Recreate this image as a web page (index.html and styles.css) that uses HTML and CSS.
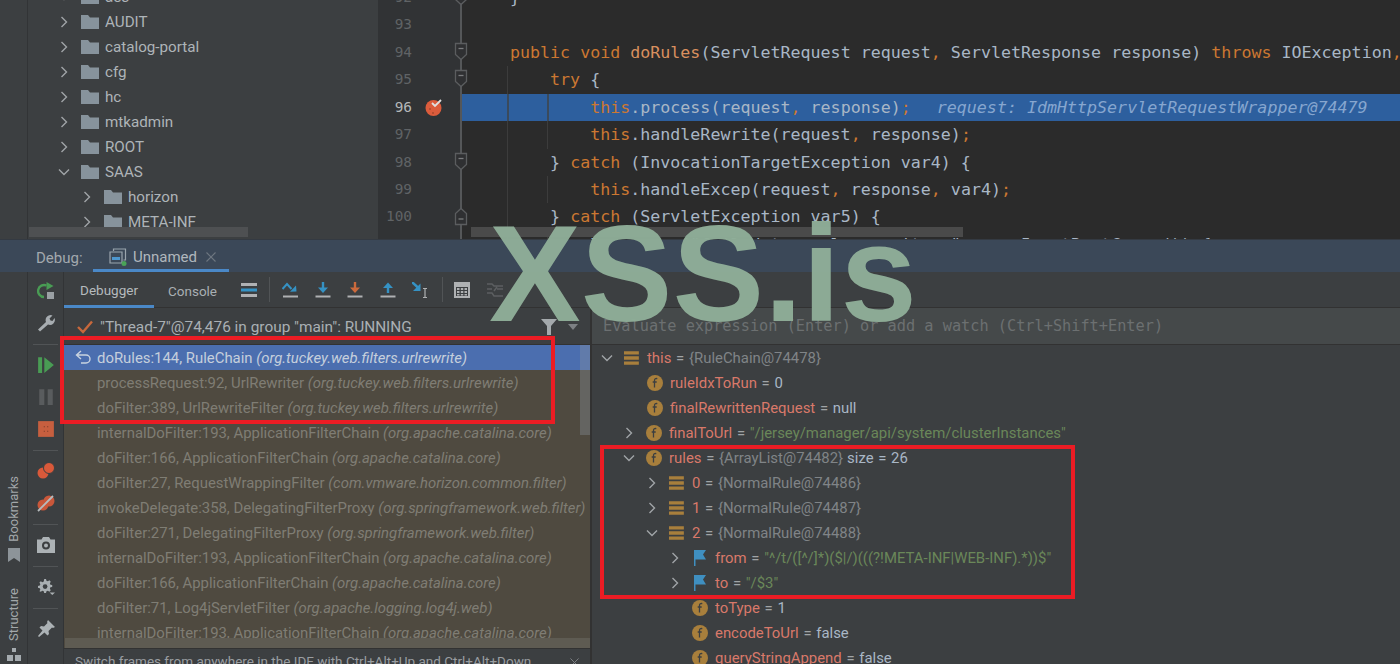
FILE: index.html
```html
<!DOCTYPE html>
<html lang="en">
<head>
<meta charset="utf-8">
<title>Debugger</title>
<link rel="stylesheet" href="styles.css">
</head>
<body>
<svg class="defs" width="0" height="0" aria-hidden="true">
  <symbol id="chev-r" viewBox="0 0 14 14"><path d="M4.500 2l5 5-5 5" fill="none" stroke="currentColor" stroke-width="1.400"/></symbol>
  <symbol id="chev-d" viewBox="0 0 14 14"><path d="M2 4.500l5 5 5-5" fill="none" stroke="currentColor" stroke-width="1.400"/></symbol>
  <symbol id="folder" viewBox="0 0 18 14"><path d="M0 0h7l2 2.500h9V14H0z" fill="#87939c"/></symbol>
  <symbol id="fold-d" viewBox="0 0 14 20"><path d="M1.500 1.500h11v11L7 17.500 1.500 12.500z" fill="#2f3032" stroke="#5b5d5f" stroke-width="1.300"/><path d="M4.500 6.500h5" stroke="#7a7c7e" stroke-width="1.300"/></symbol>
  <symbol id="fold-u" viewBox="0 0 14 20"><path d="M1.500 18.500h11v-11L7 2.500 1.500 7.500z" fill="#2f3032" stroke="#5b5d5f" stroke-width="1.300"/><path d="M4.500 13h5" stroke="#7a7c7e" stroke-width="1.300"/></symbol>
  <symbol id="field" viewBox="0 0 16 16"><circle cx="8" cy="8" r="8" fill="#a87f3c"/><path d="M10.300 3.600c-1.700-.4-2.800.3-2.800 2V12.500M5.700 7h4" fill="none" stroke="#3c3f41" stroke-width="1.300"/></symbol>
  <symbol id="list" viewBox="0 0 14 14"><path d="M0 1h13v3H0zM0 5.500h13v3H0zM0 10h13v3H0z" fill="#a87f3c"/></symbol>
  <symbol id="flag" viewBox="0 0 14 16"><path d="M1 0h12l-3 4.500L13 9.500H2.500V16H1z" fill="#3f8fc0"/></symbol>
</svg>

<div class="top">
  <div class="strip"></div>
  <nav class="tree">
    <div class="node l1"><svg class="chev"><use href="#chev-d"/></svg><svg class="fld"><use href="#folder"/></svg>aes</div>
    <div class="node l1"><svg class="chev"><use href="#chev-r"/></svg><svg class="fld"><use href="#folder"/></svg>AUDIT</div>
    <div class="node l1"><svg class="chev"><use href="#chev-r"/></svg><svg class="fld"><use href="#folder"/></svg>catalog-portal</div>
    <div class="node l1"><svg class="chev"><use href="#chev-r"/></svg><svg class="fld"><use href="#folder"/></svg>cfg</div>
    <div class="node l1"><svg class="chev"><use href="#chev-r"/></svg><svg class="fld"><use href="#folder"/></svg>hc</div>
    <div class="node l1"><svg class="chev"><use href="#chev-r"/></svg><svg class="fld"><use href="#folder"/></svg>mtkadmin</div>
    <div class="node l1"><svg class="chev"><use href="#chev-r"/></svg><svg class="fld"><use href="#folder"/></svg>ROOT</div>
    <div class="node l1"><svg class="chev"><use href="#chev-d"/></svg><svg class="fld"><use href="#folder"/></svg>SAAS</div>
    <div class="node l2"><svg class="chev"><use href="#chev-r"/></svg><svg class="fld"><use href="#folder"/></svg>horizon</div>
    <div class="node l2"><svg class="chev"><use href="#chev-r"/></svg><svg class="fld"><use href="#folder"/></svg>META-INF</div>
    <div class="hbar tree-bar"></div>
  </nav>
  <main class="editor">
    <div class="line"><span class="num">92</span><span class="bp"></span><span class="fold"><svg class="foldicon"><use href="#fold-d"/></svg></span><code class="code">}</code></div>
    <div class="line"><span class="num">93</span><span class="bp"></span><span class="fold"></span><code class="code"></code></div>
    <div class="line"><span class="num">94</span><span class="bp"></span><span class="fold"><svg class="foldicon"><use href="#fold-d"/></svg></span><code class="code"><b>public void </b><i>doRules</i>(ServletRequest request<b>,</b> ServletResponse response) <b>throws </b>IOException<b>,</b> ServletException {</code></div>
    <div class="line"><span class="num">95</span><span class="bp"></span><span class="fold"><svg class="foldicon"><use href="#fold-d"/></svg></span><code class="code g1">    <b>try</b> {</code></div>
    <div class="line cur"><span class="num">96</span><span class="bp"><svg class="bpicon" viewBox="0 0 18 18"><circle cx="8.500" cy="10" r="8" fill="#db5c3c"/><circle cx="5" cy="11" r=".8" fill="#8a3a26"/><circle cx="8" cy="15" r=".8" fill="#8a3a26"/><path d="M7 5l3 3 6-6" fill="none" stroke="#e0e0e0" stroke-width="1.800"/></svg></span><span class="fold"></span><code class="code g1 g2">        <b>this</b>.process(request<b>,</b> response)<b>;</b><em class="hint">request: IdmHttpServletRequestWrapper@74479</em></code></div>
    <div class="line"><span class="num">97</span><span class="bp"></span><span class="fold"></span><code class="code g1 g2">        <b>this</b>.handleRewrite(request<b>,</b> response)<b>;</b></code></div>
    <div class="line"><span class="num">98</span><span class="bp"></span><span class="fold"><svg class="foldicon"><use href="#fold-d"/></svg></span><code class="code g1">    } <b>catch </b>(InvocationTargetException var4) {</code></div>
    <div class="line"><span class="num">99</span><span class="bp"></span><span class="fold"></span><code class="code g1 g2">        <b>this</b>.handleExcep(request<b>,</b> response<b>,</b> var4)<b>;</b></code></div>
    <div class="line"><span class="num">100</span><span class="bp"></span><span class="fold"><svg class="foldicon"><use href="#fold-u"/></svg></span><code class="code g1">    } <b>catch </b>(ServletException var5) {</code></div>
    <div class="line"><span class="num">101</span><span class="bp"></span><span class="fold"></span><code class="code g1 g2">        log.error(<span>"failed to apply rewrite: "</span> + var5.getRootCause()) {</code></div>
    <div class="hbar editor-bar"></div>
  </main>
</div>

<section class="debug">
  <header class="debug-head">
    <span class="debug-label">Debug:</span>
    <div class="debug-tab">
      <svg class="tab-icon" viewBox="0 0 18 18"><path d="M4.500 3V1h12v11h-2" fill="none" stroke="#9aa5ad" stroke-width="1.200"/><path d="M1 4h12v11H1z" fill="none" stroke="#9aa5ad" stroke-width="1.200"/><path d="M3 9h8v3H3z" fill="#4d97cf"/><circle cx="15" cy="15.500" r="2.500" fill="#4aa357"/></svg>
      <span>Unnamed</span>
      <svg class="tab-x" viewBox="0 0 10 10"><path d="M.5.5l9 9m0-9l-9 9" stroke="#6e7780" stroke-width="1.100"/></svg>
    </div>
  </header>
  <div class="debug-body">
    <div class="side">
      <aside class="rail">
        <span class="vlabel">Bookmarks</span>
        <svg class="rail-ic bm" viewBox="0 0 12 14"><path d="M0 0h12v14L6 10 0 14z" fill="#8d9499"/></svg>
        <span class="vlabel second">Structure</span>
        <svg class="rail-ic st" viewBox="0 0 14 14"><path d="M5 0h4v4H5zM0 7h6v6H0zM8 7h6v6H8z" fill="#a5abaf"/></svg>
      </aside>
    </div>
    <div class="tools">
      <svg class="ti" viewBox="0 0 18 18"><path d="M9.500 3.500A6 6 0 1 0 7 15" fill="none" stroke="#499c54" stroke-width="2.400"/><path d="M9.500 0l7 4-7 4z" fill="#499c54"/><path d="M10 10h7v7h-7z" fill="#9aa0a4"/></svg>
      <svg class="ti" viewBox="0 0 18 18"><path d="M1 15.500l8-7.500a5 5 0 0 1 6.500-6.500L12.500 4.500l1 2 2 .5 2-3a5 5 0 0 1-6.500 6.500L3 17.500z" fill="#a7adb1"/></svg>
      <i class="tsep"></i>
      <svg class="ti" viewBox="0 0 16 16"><path d="M1 1h3.500v14H1zM6.500 1L15 8l-8.500 7z" fill="#499c54"/></svg>
      <svg class="ti" viewBox="0 0 16 16"><path d="M2 1h4.500v14H2zM9.500 1H14v14H9.500z" fill="#595c5e"/></svg>
      <svg class="ti" viewBox="0 0 16 16"><path d="M1 1h14v14H1z" fill="#c75f3f"/><path d="M6 5.500h1v1H6zM9 5.500h1v1H9zM6 9.500h1v1H6zM9 9.500h1v1H9z" fill="#7c3d2a"/></svg>
      <i class="tsep"></i>
      <svg class="ti" viewBox="0 0 18 18"><circle cx="6" cy="11" r="5.500" fill="#d9593a"/><circle cx="12" cy="6" r="5.500" fill="#d9593a" stroke="#3c3f41" stroke-width="1"/></svg>
      <svg class="ti" viewBox="0 0 18 18"><circle cx="6" cy="11" r="5.500" fill="#c9573a"/><circle cx="12" cy="7" r="5.500" fill="#c9573a"/><path d="M1 17L16 2" stroke="#b7bbbd" stroke-width="1.800"/></svg>
      <i class="tsep"></i>
      <svg class="ti" viewBox="0 0 18 16"><path d="M0 2.500h4.500L6 0h6l1.500 2.500H18V16H0z" fill="#acb2b5"/><circle cx="9" cy="8.500" r="4" fill="#3c3f41"/><circle cx="9" cy="8.500" r="2" fill="#acb2b5"/></svg>
      <i class="tsep"></i>
      <svg class="ti" viewBox="0 0 20 20"><path d="M8 1h2l.5 2 1.500.6 1.800-1 1.500 1.500-1 1.800.6 1.500 2 .5v2l-2 .5-.6 1.500 1 1.800-1.500 1.500-1.800-1-1.500.6-.5 2H8l-.5-2-1.500-.6-1.800 1L2.700 14.700l1-1.800-.6-1.500-2-.5v-2l2-.5.6-1.500-1-1.800L4.200 3.600l1.800 1 1.500-.6z" fill="#a9afb2"/><circle cx="9" cy="9.500" r="2.600" fill="#3c3f41"/><path d="M14 16h6l-3 3z" fill="#a9afb2"/></svg>
      <i class="tsep"></i>
      <svg class="ti" viewBox="0 0 18 18"><path d="M11 0l7 7-2 1-1-.5-3.500 3.500.5 3-1.500 1.500-3-3L2 17l-1-1 4.500-5.500-3-3L4 6l3 .5L10.500 3 10 2z" fill="#acb2b5"/></svg>
    </div>
    <div class="panels">
      <div class="subtabs">
        <span class="subtab on">Debugger</span>
        <span class="subtab">Console</span>
        <svg class="bi wide" viewBox="0 0 16 14"><path d="M0 0h16v3H0zM0 11h16v3H0z" fill="#afb1b3"/><path d="M0 5.500h16v3H0z" fill="#3592c4"/></svg>
        <i class="bsep first"></i>
        <svg class="bi" viewBox="0 0 16 16"><path d="M.5 7L5 2l4.500 5" fill="none" stroke="#3592c4" stroke-width="2"/><path d="M8 9.800l6.500-.3L14 3.500z" fill="#3592c4"/><path d="M1 13.500h15v2H1z" fill="#afb1b3"/></svg>
        <svg class="bi" viewBox="0 0 16 16"><path d="M8 0v7" stroke="#3592c4" stroke-width="2.400"/><path d="M3 5.500h10L8 11z" fill="#3592c4"/><path d="M.5 13.500h15v2H.5z" fill="#afb1b3"/></svg>
        <svg class="bi" viewBox="0 0 16 16"><path d="M8 0v7" stroke="#cc6a3c" stroke-width="2.400"/><path d="M3 5.500h10L8 11z" fill="#cc6a3c"/><path d="M.5 13.500h15v2H.5z" fill="#afb1b3"/></svg>
        <svg class="bi" viewBox="0 0 16 16"><path d="M8 11V4" stroke="#3592c4" stroke-width="2.400"/><path d="M3 6h10L8 .5z" fill="#3592c4"/><path d="M.5 13.500h15v2H.5z" fill="#afb1b3"/></svg>
        <svg class="bi" viewBox="0 0 16 16"><path d="M0 0l6.500 6" stroke="#3592c4" stroke-width="2.400"/><path d="M8.500 1.500V9H1z" fill="#3592c4"/><path d="M11 6.500h4M11 15.500h4M13 6.500v9" stroke="#afb1b3" stroke-width="1.200" fill="none"/></svg>
        <i class="bsep second"></i>
        <svg class="bi" viewBox="0 0 16 16"><path d="M0 0h16v16H0z" fill="#afb1b3"/><path d="M2 5h12v9H2z" fill="#3c3f41"/><path d="M3 6h2.500v2H3zM6.800 6h2.500v2H6.800zM10.500 6H13v2h-2.500zM3 9h2.500v2H3zM6.800 9h2.500v2H6.800zM10.500 9H13v2h-2.500zM3 12h2.500v1.500H3zM6.800 12h2.500v1.500H6.800zM10.500 12H13v1.500h-2.500z" fill="#afb1b3"/></svg>
        <svg class="bi" viewBox="0 0 16 14"><path d="M0 1h5l2 2h9M0 6h5M10 6h6M0 10h5l2 3h9M7 8l3-4" fill="none" stroke="#5c5f61" stroke-width="1.500"/></svg>
      </div>
      <div class="split">
        <div class="stack">
          <div class="thread">
            <svg class="check" viewBox="0 0 16 14"><path d="M1 7l5 5L15 1.500" fill="none" stroke="#c7683c" stroke-width="2.400"/></svg>
            <span>"Thread-7"@74,476 in group "main": RUNNING</span>
            <svg class="funnel" viewBox="0 0 16 16"><path d="M0 0h16l-6 7v9H6V7z" fill="#a4a9ac"/></svg>
            <svg class="caret" viewBox="0 0 10 6"><path d="M0 0h10L5 6z" fill="#7d8184"/></svg>
          </div>
          <ul class="frames">
            <li class="frame sel"><svg class="ret" viewBox="0 0 16 14"><path d="M6 1L1.500 5 6 9M2 5h9a3.500 3.500 0 0 1 0 8H6" fill="none" stroke="#c9d3e0" stroke-width="1.400"/></svg>doRules:144, RuleChain <em>(org.tuckey.web.filters.urlrewrite)</em></li>
            <li class="frame">processRequest:92, UrlRewriter <em>(org.tuckey.web.filters.urlrewrite)</em></li>
            <li class="frame">doFilter:389, UrlRewriteFilter <em>(org.tuckey.web.filters.urlrewrite)</em></li>
            <li class="frame">internalDoFilter:193, ApplicationFilterChain <em>(org.apache.catalina.core)</em></li>
            <li class="frame">doFilter:166, ApplicationFilterChain <em>(org.apache.catalina.core)</em></li>
            <li class="frame">doFilter:27, RequestWrappingFilter <em>(com.vmware.horizon.common.filter)</em></li>
            <li class="frame">invokeDelegate:358, DelegatingFilterProxy <em>(org.springframework.web.filter)</em></li>
            <li class="frame">doFilter:271, DelegatingFilterProxy <em>(org.springframework.web.filter)</em></li>
            <li class="frame">internalDoFilter:193, ApplicationFilterChain <em>(org.apache.catalina.core)</em></li>
            <li class="frame">doFilter:166, ApplicationFilterChain <em>(org.apache.catalina.core)</em></li>
            <li class="frame">doFilter:71, Log4jServletFilter <em>(org.apache.logging.log4j.web)</em></li>
            <li class="frame">internalDoFilter:193, ApplicationFilterChain <em>(org.apache.catalina.core)</em></li>
            <li class="vbar"></li>
            <li class="fbar"></li>
          </ul>
          <div class="hintbar"><span>Switch frames from anywhere in the IDE with Ctrl+Alt+Up and Ctrl+Alt+Down</span><svg class="hint-x" viewBox="0 0 10 10"><path d="M.5.5l9 9m0-9l-9 9" stroke="#7d8184" stroke-width="1.100"/></svg></div>
        </div>
        <div class="vars">
          <div class="evaluate">Evaluate expression (Enter) or add a watch (Ctrl+Shift+Enter)</div>
          <div class="var v0"><svg class="arr"><use href="#chev-d"/></svg><svg class="vic"><use href="#list"/></svg><span class="n">this</span> = <span class="g">{RuleChain@74478}</span></div>
          <div class="var v1"><span class="arr"></span><svg class="vic"><use href="#field"/></svg><span class="n">ruleIdxToRun</span> = <span class="l">0</span></div>
          <div class="var v1"><span class="arr"></span><svg class="vic"><use href="#field"/></svg><span class="n">finalRewrittenRequest</span> = <span class="l">null</span></div>
          <div class="var v0 shift"><svg class="arr"><use href="#chev-r"/></svg><svg class="vic"><use href="#field"/></svg><span class="n">finalToUrl</span> = <span class="s">"/jersey/manager/api/system/clusterInstances"</span></div>
          <div class="var v0 shift"><svg class="arr"><use href="#chev-d"/></svg><svg class="vic"><use href="#field"/></svg><span class="n">rules</span> = <span class="g">{ArrayList@74482}</span> <span class="l size">size = 26</span></div>
          <div class="var v2"><svg class="arr"><use href="#chev-r"/></svg><svg class="vic"><use href="#list"/></svg><span class="n">0</span> = <span class="g">{NormalRule@74486}</span></div>
          <div class="var v2"><svg class="arr"><use href="#chev-r"/></svg><svg class="vic"><use href="#list"/></svg><span class="n">1</span> = <span class="g">{NormalRule@74487}</span></div>
          <div class="var v2"><svg class="arr"><use href="#chev-d"/></svg><svg class="vic"><use href="#list"/></svg><span class="n">2</span> = <span class="g">{NormalRule@74488}</span></div>
          <div class="var v3"><svg class="arr"><use href="#chev-r"/></svg><svg class="vic"><use href="#flag"/></svg><span class="n">from</span> = <span class="s">"^/t/([^/]*)($|/)(((?!META-INF|WEB-INF).*))$"</span></div>
          <div class="var v3"><svg class="arr"><use href="#chev-r"/></svg><svg class="vic"><use href="#flag"/></svg><span class="n">to</span> = <span class="s">"/$3"</span></div>
          <div class="var v3"><span class="arr"></span><svg class="vic"><use href="#field"/></svg><span class="n">toType</span> = <span class="l">1</span></div>
          <div class="var v3"><span class="arr"></span><svg class="vic"><use href="#field"/></svg><span class="n">encodeToUrl</span> = <span class="l">false</span></div>
          <div class="var v3"><span class="arr"></span><svg class="vic"><use href="#field"/></svg><span class="n">queryStringAppend</span> = <span class="l">false</span></div>
        </div>
      </div>
    </div>
  </div>
</section>

<div class="redbox box-frames"></div>
<div class="redbox box-rules"></div>
<div class="watermark">XSS.is</div>
</body>
</html>
```

FILE: styles.css
```css
* { box-sizing: border-box; }
html, body { margin: 0; padding: 0; }
body {
  position: relative;
  width: 1400px;
  height: 664px;
  overflow: hidden;
  background: #3c3f41;
  font-family: Roboto, "Liberation Sans", sans-serif;
  font-size: 15px;
  color: #aeb4b8;
}
.defs { position: absolute; }

/* top area */
.top { display: flex; height: 239px; overflow: hidden; }
.strip { width: 28px; flex: none; background: #3c3f41; border-right: 1px solid #323436; }
.tree {
  position: relative;
  width: 350px;
  flex: none;
  height: 239px;
  overflow: hidden;
  background: #3c3f41;
}
.node {
  display: flex;
  align-items: center;
  height: 25px;
  padding-top: 1px;
  white-space: nowrap;
  font-size: 15.200px;
  color: #aeb4b8;
}
.node:first-child { margin-top: -16px; }
.node.l1 { padding-left: 29px; }
.node.l2 { padding-left: 52px; }
.chev { width: 14px; height: 14px; color: #a0a4a7; flex: none; }
.fld { width: 18px; height: 14px; margin: 0 6px 0 10px; flex: none; }
.hbar { position: absolute; height: 10px; top: 227px; background: #4e5052; }
.tree-bar { left: 1px; width: 219px; }

.editor {
  position: relative;
  flex: 1;
  height: 239px;
  overflow: hidden;
  background: #2b2b2b;
}
.editor-bar { left: 93px; width: 492px; background: #4a4a4a; }
.line {
  display: flex;
  height: 27.430px;
  white-space: pre;
  font-family: "DejaVu Sans Mono", "Liberation Mono", monospace;
  align-items: stretch;
}
.line:first-child { margin-top: -16px; }
.num {
  width: 34px;
  flex: none;
  background: #313335;
  color: #606366;
  text-align: right;
  font-size: 14.400px;
  line-height: 27.430px;
}
.cur .num { color: #b5b8ba; }
.bp {
  width: 40px;
  flex: none;
  background: #313335;
  padding: 4px 0 0 13px;
}
.bpicon { display: block; width: 18px; height: 18px; }
.fold {
  width: 18px;
  flex: none;
  position: relative;
  background:
    linear-gradient(#555759, #555759) 8px 0 / 2px 100% no-repeat,
    linear-gradient(90deg, #313335 8px, #2b2b2b 8px);
}
.cur .fold {
  background:
    linear-gradient(#555759, #555759) 8px 0 / 2px 100% no-repeat,
    linear-gradient(90deg, #313335 8px, #2d5f9e 8px);
}
.foldicon { position: absolute; left: 2px; top: 3px; width: 14px; height: 20px; }
.code {
  flex: 1;
  padding-left: 40px;
  font-family: inherit;
  font-size: 16.650px;
  line-height: 27.430px;
  color: #a9b7c6;
  overflow: hidden;
}
.code b { font-weight: 400; color: #cc7832; }
.code i { font-style: normal; color: #d9905f; }
.code.g1 { background: linear-gradient(#3c3c3c, #3c3c3c) 37px 0 / 1px 100% no-repeat; }
.code.g1.g2 {
  background:
    linear-gradient(#3c3c3c, #3c3c3c) 37px 0 / 1px 100% no-repeat,
    linear-gradient(#3c3c3c, #3c3c3c) 77px 0 / 1px 100% no-repeat;
}
.cur .code.g1.g2 {
  background:
    linear-gradient(#3a4a5c, #3a4a5c) 37px 0 / 2px 100% no-repeat,
    linear-gradient(#3a4a5c, #3a4a5c) 77px 0 / 2px 100% no-repeat,
    #2d5f9e;
}
.hint { margin-left: 26px; font-style: italic; color: #86a6cf; }

/* debug panel */
.debug { height: 425px; display: flex; flex-direction: column; overflow: hidden; }
.debug-head {
  display: flex;
  align-items: center;
  height: 33px;
  flex: none;
  padding-left: 28px;
  background: #3b4858;
  border-top: 1px solid #343a42;
}
.debug-label { width: 65px; padding: 3px 0 0 8px; font-size: 15px; color: #a3a9ae; }
.debug-tab {
  display: flex;
  align-items: center;
  width: 136px;
  height: 32px;
  padding: 4px 0 0 16px;
  border-bottom: 3px solid #4a88c7;
  font-size: 15px;
  color: #b0b7bd;
}
.tab-icon { width: 18px; height: 18px; margin-right: 6px; }
.tab-x { width: 10px; height: 10px; margin-left: 9px; }

.debug-body { display: flex; flex: 1; min-height: 0; }
.side { width: 28px; flex: none; border-right: 1px solid #323436; }
.rail { display: flex; flex-direction: column; align-items: center; height: 100%; padding-top: 204px; overflow: hidden; }
.vlabel {
  writing-mode: vertical-rl;
  transform: rotate(180deg);
  font-size: 13px;
  color: #a3a8ab;
  line-height: 16px;
  flex: none;
}
.vlabel.second { margin-top: 26px; }
.rail-ic { flex: none; }
.rail-ic.bm { width: 12px; height: 14px; margin-top: 6px; }
.rail-ic.st { width: 14px; height: 14px; margin-top: 7px; }

.tools {
  width: 36px;
  flex: none;
  display: flex;
  flex-direction: column;
  align-items: center;
  padding-top: 10px;
  border-right: 1px solid #323436;
}
.ti { width: 18px; height: 18px; flex: none; margin-bottom: 14px; }
.tsep { display: block; width: 25px; height: 1px; background: #515456; margin: -2px 0 11px; flex: none; }

.panels { flex: 1; display: flex; flex-direction: column; min-width: 0; }
.subtabs {
  display: flex;
  align-items: center;
  height: 36px;
  flex: none;
  border-bottom: 1px solid #323232;
}
.subtab {
  display: flex;
  align-items: center;
  justify-content: center;
  height: 36px;
  padding-top: 2px;
  font-size: 13.500px;
  color: #a9afb3;
  width: 90px;
}
.subtab + .subtab { width: 77px; }
.subtab.on { border-bottom: 3px solid #4a88c7; color: #b5babd; padding-top: 3px; }
.bi { width: 16px; height: 16px; flex: none; margin-left: 16.500px; }
.bi.wide { margin-left: 10px; }
.bsep { width: 1px; height: 25px; background: #515456; flex: none; }
.bsep.first { margin: 0 -4.500px 0 12px; }
.bsep.second { margin: 0 -5.500px 0 14px; }

.split { display: flex; flex: 1; min-height: 0; }
.stack { width: 526px; flex: none; display: flex; flex-direction: column; }
.thread {
  display: flex;
  align-items: center;
  height: 37px;
  flex: none;
  padding: 1px 0 0 13px;
  font-size: 15.400px;
  color: #aab0b4;
  border-bottom: 1px solid #323232;
}
.check { width: 16px; height: 14px; margin-right: 7px; flex: none; }
.funnel { width: 16px; height: 16px; margin-left: auto; flex: none; }
.caret { width: 10px; height: 6px; margin: 0 12px 0 11px; flex: none; }

.frames {
  position: relative;
  height: 303px;
  flex: none;
  overflow: hidden;
  list-style: none;
  margin: 0;
  padding: 0;
  background: #4f4a40;
}
.frame {
  position: relative;
  height: 25px;
  line-height: 26px;
  padding-left: 33px;
  white-space: nowrap;
  font-size: 14.900px;
  color: #7f7d74;
}
.frame em { font-style: italic; }
.frame.sel { background: #4b6eaf; color: #c5cfdc; }
.ret { position: absolute; left: 11px; top: 5px; width: 16px; height: 14px; }
.vbar { position: absolute; left: 516px; top: 0; width: 10px; height: 90px; background: rgba(140, 150, 160, .35); }
.fbar { position: absolute; left: 1px; top: 293px; width: 525px; height: 10px; background: #5e5b52; }
.hintbar {
  position: relative;
  flex: 1;
  display: flex;
  align-items: center;
  padding-left: 11px;
  font-size: 13.500px;
  color: #9a9ea1;
  white-space: nowrap;
  overflow: hidden;
  border-top: 1px solid #323232;
}
.hintbar span { position: relative; top: 4px; }
.hint-x { position: absolute; left: 506px; top: 9px; width: 9px; height: 9px; }

.vars { flex: 1; border-left: 2px solid #323232; min-width: 0; overflow: hidden; }
.evaluate {
  height: 37px;
  padding-left: 11px;
  background: #45494a;
  border-bottom: 1px solid #323232;
  font-family: "DejaVu Sans Mono", "Liberation Mono", monospace;
  font-size: 15.250px;
  line-height: 37px;
  color: #6c7071;
  white-space: nowrap;
}
.var {
  display: flex;
  align-items: center;
  height: 25px;
  padding-top: 1px;
  white-space: pre;
  word-spacing: 1px;
  font-size: 14.900px;
  color: #a0a4a6;
}
.var.v0 { padding-left: 8px; }
.var.v1 { padding-left: 31px; }
.var.v0.shift { padding-left: 30px; }
.var.v2 { padding-left: 53px; }
.var.v3 { padding-left: 76px; }
.arr { display: block; width: 14px; height: 14px; flex: none; margin-right: 10px; color: #a0a4a7; }
.vic { width: 16px; height: 16px; flex: none; margin-right: 7px; }
.n { color: #d9796a; }
.g { color: #808487; }
.s { color: #6a8759; }
.l { color: #a9b7c6; }
.size { margin-left: 4px; }

/* overlays */
.redbox { position: absolute; border: 4px solid #ec1c24; }
.box-frames { left: 60px; top: 336px; width: 495px; height: 88px; }
.box-rules { left: 600px; top: 445px; width: 475px; height: 154px; }
.watermark {
  position: absolute;
  left: 489px;
  top: 196px;
  font-family: "Liberation Sans", Arial, sans-serif;
  font-weight: 700;
  font-size: 137.500px;
  line-height: 156px;
  color: #8fae98;
  opacity: .97;
  white-space: nowrap;
}
```
